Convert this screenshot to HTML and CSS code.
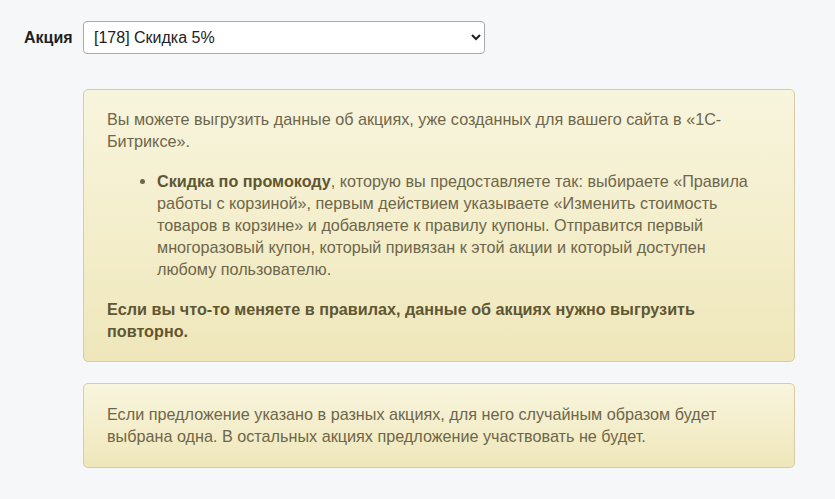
FILE: index.html
```html
<!DOCTYPE html>
<html lang="ru">
<head>
<meta charset="utf-8">
<link rel="stylesheet" href="styles.css">
</head>
<body>
<div class="page">
  <div class="field">
    <label class="field-label" for="promo">Акция</label>
    <select id="promo" class="field-select">
      <option>[178] Скидка 5%</option>
    </select>
  </div>
  <div class="notes">
    <div class="note">
      <p class="note-p">Вы можете выгрузить данные об акциях, уже созданных для вашего сайта в «1С-Битриксе».</p>
      <ul class="note-list">
        <li><b class="strong">Скидка по промокоду</b>, которую вы предоставляете так: выбираете «Правила работы с корзиной», первым действием указываете «Изменить стоимость товаров в корзине» и добавляете к правилу купоны. Отправится первый многоразовый купон, который привязан к этой акции и который доступен любому пользователю.</li>
      </ul>
      <p class="note-p strong">Если вы что-то меняете в правилах, данные об акциях нужно выгрузить повторно.</p>
    </div>
    <div class="note">
      <p class="note-p">Если предложение указано в разных акциях, для него случайным образом будет выбрана одна. В остальных акциях предложение участвовать не будет.</p>
    </div>
  </div>
</div>
</body>
</html>
```
FILE: styles.css
```css
html, body {
  margin: 0;
  padding: 0;
  background: #f5f7f9;
}
.page {
  font-family: "Liberation Sans", Arial, sans-serif;
  font-size: 16px;
  color: #222;
  padding: 21px 0 0 24px;
}
.field {
  display: flex;
  align-items: center;
}
.field-label {
  width: 59px;
  font-weight: bold;
  color: #1f1f1f;
  font-size: 16px;
}
.field-select {
  width: 402px;
  height: 33px;
  border: 1px solid #a8a8a8;
  border-radius: 4px;
  background: #fff;
  font-family: "Liberation Sans", Arial, sans-serif;
  font-size: 16px;
  color: #222;
  padding: 0 6px;
}
.notes {
  margin: 35px 0 0 59px;
  width: 712px;
  display: flex;
  flex-direction: column;
  gap: 21px;
}
.note {
  border: 1px solid #d6cea2;
  border-radius: 5px;
  background: linear-gradient(to bottom, #f8f5de 0%, #efe7ba 100%);
  padding: 18px 30px 19px 23px;
  color: #6e6649;
  font-size: 16.2px;
  line-height: 22px;
}
.note-p {
  margin: 0;
}
.note-list {
  margin: 18px 0;
  padding-left: 50px;
}
.strong {
  font-weight: bold;
  color: #5f5632;
}
.note + .note {
  padding-top: 19px;
  padding-bottom: 20px;
}
```
